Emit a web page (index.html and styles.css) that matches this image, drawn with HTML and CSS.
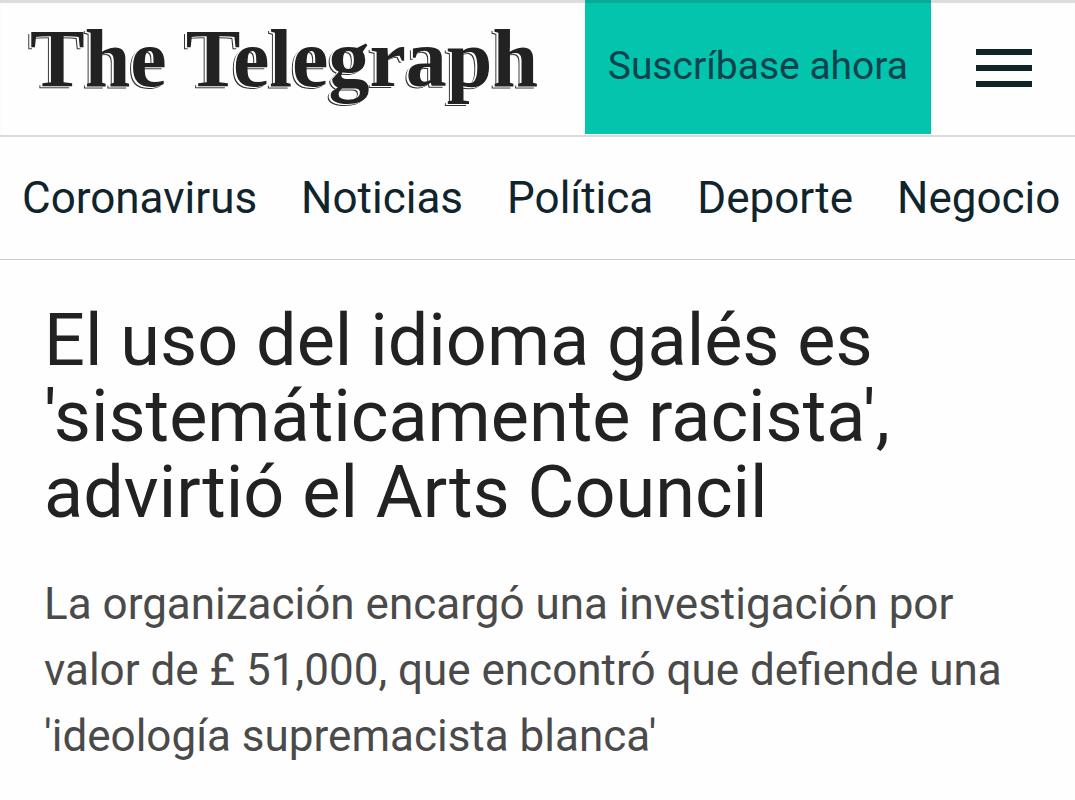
FILE: index.html
```html
<!DOCTYPE html>
<html lang="es">
<head>
    <meta charset="UTF-8">
    <meta name="viewport" content="width=device-width, initial-scale=1.0">
    <title>The Telegraph</title>
    <link rel="stylesheet" href="styles.css">
</head>
<body>
    <!-- Cabecera -->
    <header class="header">
        <a href="#" class="logo">The Telegraph</a>
        <a href="#" class="subscribe">Suscríbase ahora</a>
        <button type="button" class="menu-button" aria-label="Menú">
            <svg width="56" height="38" viewBox="0 0 56 38" fill="#10242c">
                <rect width="56" height="6"/>
                <rect y="16" width="56" height="6"/>
                <rect y="32" width="56" height="6"/>
            </svg>
        </button>
    </header>

    <!-- Secciones -->
    <nav class="nav">
        <a href="#">Coronavirus</a>
        <a href="#">Noticias</a>
        <a href="#">Política</a>
        <a href="#">Deporte</a>
        <a href="#">Negocio</a>
    </nav>

    <!-- Artículo -->
    <main class="article">
        <h1>El uso del idioma galés es 'sistemáticamente racista', advirtió el Arts Council</h1>
        <p>La organización encargó una investigación por valor de £ 51,000, que encontró que defiende una 'ideología supremacista blanca'</p>
    </main>
</body>
</html>
```

FILE: styles.css
```css
body {
    margin: 0;
    background-color: #fefefe;
    font-family: Roboto, sans-serif;
    color: #222;
}

a {
    color: inherit;
    text-decoration: none;
}

/* Cabecera */
.header {
    display: flex;
    height: 135px;
    border-bottom: 2px solid #dadada;
    box-shadow: inset 0 3px 1px #dcdcdc;
}

.logo {
    flex: 1;
    padding-left: 30px;
    font-family: "Liberation Serif", serif;
    font-size: 82px;
    font-weight: bold;
    line-height: 118px;
    white-space: nowrap;
    text-shadow: -2px 1px 0 #fff, -3px 2px 0 #333;
}

.subscribe {
    height: 134px;
    padding: 0 23px;
    background-color: #03c4ad;
    box-shadow: inset 0 3px 1px #0aa896;
    color: #10424e;
    font-size: 39px;
    line-height: 132px;
    white-space: nowrap;
}

.menu-button {
    width: 144px;
    padding: 0 0 0 2px;
    border: none;
    background: none;
    cursor: pointer;
}

.menu-button svg {
    vertical-align: middle;
}

/* Secciones */
.nav {
    display: flex;
    gap: 44px;
    padding: 0 22px;
    overflow: hidden;
    border-bottom: 1px solid #ccc;
    color: #10242c;
    font-size: 44px;
    line-height: 122px;
    white-space: nowrap;
}

/* Artículo */
.article {
    padding: 43px 44px;
}

.article h1 {
    max-width: 880px;
    margin: 0 0 40px;
    font-size: 72px;
    font-weight: normal;
    line-height: 76px;
}

.article p {
    margin: 0;
    color: #4a4a4a;
    font-size: 44px;
    line-height: 66px;
}
```
